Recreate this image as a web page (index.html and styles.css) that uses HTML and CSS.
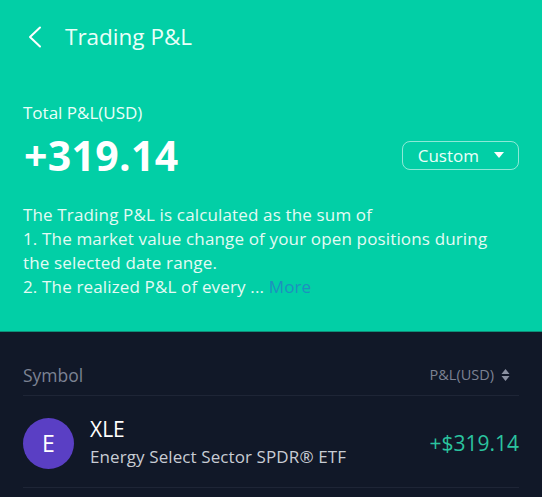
FILE: index.html
```html
<!DOCTYPE html>
<html lang="en">
  <head>
    <meta charset="UTF-8" />
    <meta name="viewport" content="width=device-width, initial-scale=1.0" />
    <title>Trading P&amp;L</title>
    <link rel="stylesheet" href="styles.css">
  </head>
  <body>
    <div class="hero">
      <header class="nav">
        <svg class="back" width="16" height="24" viewBox="0 0 16 24">
          <path d="M13 2.5 L3 12 L13 21.5" fill="none" stroke="#ffffff" stroke-width="2" stroke-linecap="round" stroke-linejoin="round"/>
        </svg>
        <span class="nav-title">Trading P&amp;L</span>
      </header>
      <div class="total-label">Total P&amp;L(USD)</div>
      <div class="total-row">
        <span class="total-value">+319.14</span>
        <button class="range-btn">Custom <span class="caret"></span></button>
      </div>
      <p class="desc">
        The Trading P&amp;L is calculated as the sum of<br>
        1. The market value change of your open positions during<br>
        the selected date range.<br>
        2. The realized P&amp;L of every ... <a href="#" class="more">More</a>
      </p>
    </div>
    <div class="list">
      <div class="list-head">
        <span>Symbol</span>
        <span class="sort">P&amp;L(USD)
          <svg width="9" height="14" viewBox="0 0 9 14">
            <path d="M4.5 1 L8.5 6 L0.5 6 Z M4.5 13 L8.5 8 L0.5 8 Z" fill="#8a90a0"/>
          </svg>
        </span>
      </div>
      <div class="row">
        <div class="avatar">E</div>
        <div class="info">
          <div class="ticker">XLE</div>
          <div class="name">Energy Select Sector SPDR® ETF</div>
        </div>
        <div class="pnl">+$319.14</div>
      </div>
    </div>
  </body>
</html>
```

FILE: styles.css
```css
body {
  margin: 0;
  font-family: "Open Sans", "Noto Sans", sans-serif;
  background-color: #111828;
  overflow: hidden;
}
.hero {
  background-color: #02cfa6;
  color: white;
  padding: 0 23px;
  height: 332px;
  box-sizing: border-box;
  border-bottom: 1px solid #0e8f78;
}
.nav {
  display: flex;
  align-items: center;
  height: 76px;
  padding-bottom: 3px;
  box-sizing: border-box;
}
.back {
  margin-left: 4px;
  margin-right: 22px;
}
.nav-title {
  font-size: 22.5px;
  color: #eafff9;
}
.total-label {
  margin-top: 25px;
  font-size: 17px;
  color: #eafff9;
}
.total-row {
  display: flex;
  justify-content: space-between;
  align-items: center;
  margin-top: 3px;
}
.total-value {
  font-size: 41px;
  font-weight: 700;
  line-height: 56px;
  letter-spacing: 0.3px;
  margin-left: 1px;
}
.range-btn {
  display: flex;
  align-items: center;
  height: 29px;
  padding: 0 14px 0 15px;
  background: transparent;
  border: 1px solid rgba(255, 255, 255, 0.55);
  border-radius: 8px;
  color: #eafff9;
  font-family: inherit;
  font-size: 17px;
}
.caret {
  width: 0;
  height: 0;
  border-left: 5px solid transparent;
  border-right: 5px solid transparent;
  border-top: 6px solid white;
  margin-left: 15px;
}
.desc {
  margin: 20px 0 0;
  font-size: 17px;
  line-height: 24px;
  letter-spacing: 0.15px;
  color: #e4fbf4;
}
.more {
  color: #1e8fbf;
  text-decoration: none;
}
.list {
  padding: 0 23px;
}
.list-head {
  display: flex;
  justify-content: space-between;
  align-items: flex-end;
  height: 64px;
  padding-bottom: 9px;
  box-sizing: border-box;
  border-bottom: 1px solid #1e2536;
  color: #7c8293;
  font-size: 17.5px;
  line-height: 22px;
}
.sort {
  display: flex;
  align-items: center;
  gap: 7px;
  font-size: 14.5px;
  margin-right: 9px;
}
.row {
  display: flex;
  align-items: center;
  height: 92px;
  padding-top: 3px;
  box-sizing: border-box;
  border-bottom: 1px solid #1e2536;
}
.avatar {
  width: 51px;
  height: 51px;
  border-radius: 50%;
  background-color: #5a3fc4;
  color: white;
  font-size: 23px;
  display: flex;
  justify-content: center;
  align-items: center;
  margin-right: 16px;
}
.info {
  flex: 1;
}
.ticker {
  font-size: 21px;
  color: white;
  line-height: 28px;
}
.name {
  font-size: 17px;
  color: #c8ccd4;
  line-height: 28px;
  letter-spacing: 0.1px;
}
.pnl {
  font-size: 21px;
  color: #2bc39f;
}
```
